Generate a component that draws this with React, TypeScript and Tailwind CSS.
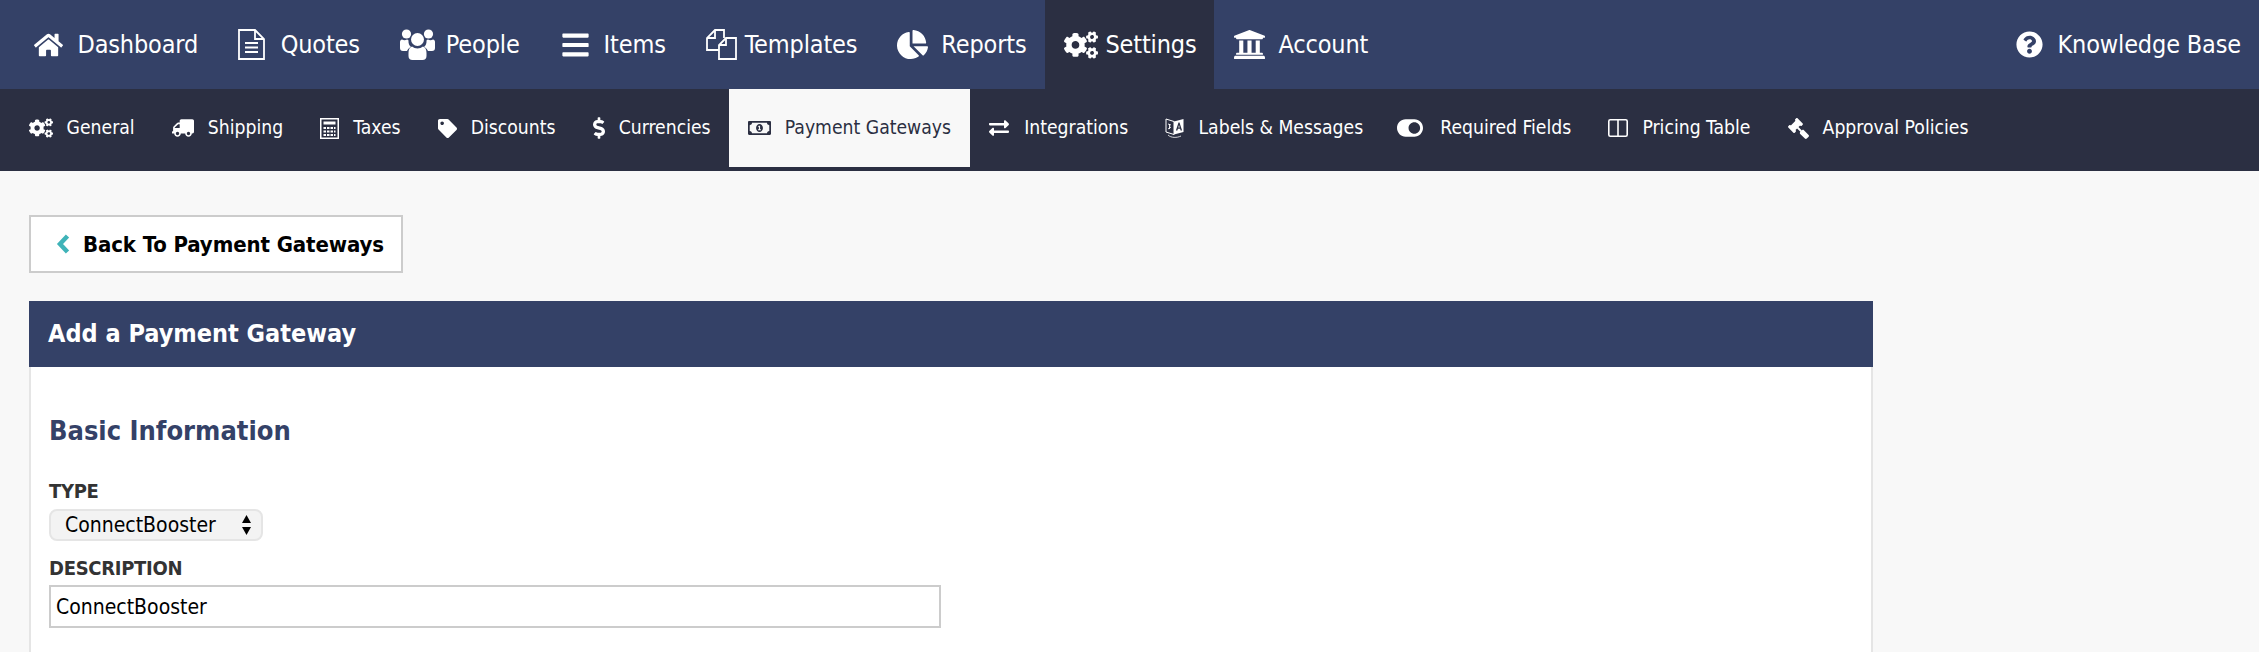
import type { ComponentType } from 'react';
import {
  FaHome, FaBars, FaChartPie, FaCogs, FaUniversity, FaQuestionCircle, FaTruck, FaTag,
  FaDollarSign, FaRegMoneyBillAlt, FaExchangeAlt, FaToggleOn, FaGavel,
} from 'react-icons/fa';

type IconProps = { className?: string };
type IconType = ComponentType<IconProps>;

function DocIcon({ className }: IconProps) {
  return (
    <svg viewBox="0 0 27 31" className={className} fill="none" stroke="currentColor" strokeWidth="1.8">
      <path d="M1 1h16l9 9v20H1z" />
      <path d="M17 1v9h9" />
      <path d="M7 14h13M7 18.5h13M7 23h13" strokeWidth="2" />
    </svg>
  );
}

function PeopleIcon({ className }: IconProps) {
  return (
    <svg viewBox="0 0 35 31" className={className} fill="currentColor">
      <circle cx="6.5" cy="5" r="4.6" />
      <circle cx="28.500" cy="5" r="4.6" />
      <circle cx="17.500" cy="10.500" r="6.500" />
      <path d="M0 13c0-1.500 1-2.500 2-2.500 1.500 1 3.500 1 5 0 .5 0 1 .5 1.500 1-.3 2.500.7 5 2.500 6.500-2 1-3.500 2.500-4 4H3c-2 0-3-1-3-3z" />
      <path d="M35 13c0-1.500-1-2.500-2-2.500-1.500 1-3.500 1-5 0-.5 0-1 .5-1.500 1 .3 2.500-.7 5-2.500 6.500 2 1 3.500 2.500 4 4h4c2 0 3-1 3-3z" />
      <path d="M12 17.500c3 2.500 8 2.500 11 0 2.500 1 3.500 3 3.500 6.500v3c0 2.500-1.500 4-4 4h-10c-2.500 0-4-1.500-4-4v-3c0-3.500 1-5.500 3.500-6.500z" />
    </svg>
  );
}

function FilesIcon({ className }: IconProps) {
  return (
    <svg viewBox="0 0 31 31" className={className} fill="none" stroke="currentColor" strokeWidth="1.8">
      <path d="M13 21H1V9l8-8h9v8" />
      <path d="M9 1v8H1" />
      <path d="M13 30V16l7-7h10v21z" />
      <path d="M20 9v7h-7" />
    </svg>
  );
}

function CalcIcon({ className }: IconProps) {
  return (
    <svg viewBox="0 0 19 21" className={className} fill="currentColor">
      <path fillRule="evenodd" d="M0 0h19v21H0zM1.500 1.500v18h16v-18z" />
      <path d="M3.500 3.500h12v3h-12z" />
      <path d="M3.500 9h2.500v2H3.500zM7 9h2.500v2H7zM10.500 9H13v2h-2.500zM14 9h1.500v2H14zM3.500 12.500h2.500v2H3.500zM7 12.500h2.500v2H7zM10.500 12.500H13v2h-2.500zM14 12.500h1.500v2H14zM3.500 16h2.500v2H3.500zM7 16h2.500v2H7zM10.500 16H13v2h-2.500zM14 16h1.500v2H14z" />
    </svg>
  );
}

function LabelsIcon({ className }: IconProps) {
  return (
    <svg viewBox="0 0 19 22" className={className}>
      <path d="M1 2l8 2.500v13L1 15z" fill="none" stroke="currentColor" strokeWidth="1" />
      <path d="M3 7l3 1M4.500 7v5M3 12l3-2" fill="none" stroke="currentColor" strokeWidth="0.9" />
      <path d="M9 4.500L18.500 2v13L9 17.500z" fill="currentColor" />
      <path d="M13.500 5.500l-2.600 8h1.500l.5-1.700h2.200l.5 1.700h1.500l-2.600-8zm-.2 5l.7-2.600.7 2.600z" fill="#2b2f42" />
      <path d="M3 18c3 3 9 3 13 1" fill="none" stroke="currentColor" strokeWidth="0.8" />
    </svg>
  );
}

function ColumnsIcon({ className }: IconProps) {
  return (
    <svg viewBox="0 0 20 18" className={className} fill="none" stroke="currentColor" strokeWidth="1.6">
      <rect x="0.8" y="0.8" width="18.400" height="16.400" rx="1.500" />
      <path d="M10 1v16" />
    </svg>
  );
}

const mainItems: { label: string; icon: IconType; iconClass: string; itemClass: string; active?: boolean }[] = [
  { label: 'Dashboard', icon: FaHome, iconClass: 'w-[29px] h-[26px]', itemClass: 'gap-[14.500px] pr-[20.500px]' },
  { label: 'Quotes', icon: DocIcon, iconClass: 'w-[27px] h-[31px]', itemClass: 'gap-[16px] pr-[21px]' },
  { label: 'People', icon: PeopleIcon, iconClass: 'w-[35px] h-[31px]', itemClass: 'gap-[11px] pr-[22px]' },
  { label: 'Items', icon: FaBars, iconClass: 'w-[29px] h-[30px]', itemClass: 'gap-[14px] pr-[21px]' },
  { label: 'Templates', icon: FilesIcon, iconClass: 'w-[31px] h-[31px]', itemClass: 'gap-[8px] pr-[21px]' },
  { label: 'Reports', icon: FaChartPie, iconClass: 'w-[31px] h-[31px]', itemClass: 'gap-[13px] pr-[19px]' },
  { label: 'Settings', icon: FaCogs, iconClass: 'w-[34px] h-[30px]', itemClass: 'gap-[7px] pr-[17px]', active: true },
  { label: 'Account', icon: FaUniversity, iconClass: 'w-[33px] h-[33px]', itemClass: 'gap-[13px] pr-[19px]' },
];

const subItems: { label: string; icon: IconType; iconClass: string; active?: boolean }[] = [
  { label: 'General', icon: FaCogs, iconClass: 'w-[24px] h-[22px]' },
  { label: 'Shipping', icon: FaTruck, iconClass: 'w-[22px] h-[20px] -scale-x-100' },
  { label: 'Taxes', icon: CalcIcon, iconClass: 'w-[19px] h-[21px]' },
  { label: 'Discounts', icon: FaTag, iconClass: 'w-[19px] h-[19px]' },
  { label: 'Currencies', icon: FaDollarSign, iconClass: 'w-[12px] h-[22px]' },
  { label: 'Payment Gateways', icon: FaRegMoneyBillAlt, iconClass: 'w-[23px] h-[20px]', active: true },
  { label: 'Integrations', icon: FaExchangeAlt, iconClass: 'w-[22px] h-[20px]' },
  { label: 'Labels & Messages', icon: LabelsIcon, iconClass: 'w-[19px] h-[22px]' },
  { label: 'Required Fields', icon: FaToggleOn, iconClass: 'w-[26px] h-[24px] -ml-[3px] mr-[3px]' },
  { label: 'Pricing Table', icon: ColumnsIcon, iconClass: 'w-[20px] h-[18px]' },
  { label: 'Approval Policies', icon: FaGavel, iconClass: 'w-[21px] h-[21px] -scale-x-100' },
];

export default function App() {
  return (
    <div className="h-[652px] overflow-hidden bg-[#f8f8f8] flex flex-col font-['DejaVu_Sans_Condensed','DejaVu_Sans',sans-serif]">
      <div className="h-[89px] flex-none bg-[#344167] flex items-center justify-between pl-[15px] text-white text-[25px] tracking-[-0.15px]">
        <div className="flex h-full">
          {mainItems.map((item) => {
            const Icon = item.icon;
            return (
              <div key={item.label} className={`flex items-center pl-[19px] ${item.itemClass} ${item.active ? 'bg-[#2b2f42]' : ''}`}>
                <Icon className={`flex-none ${item.iconClass}`} />
                <span>{item.label}</span>
              </div>
            );
          })}
        </div>
        <div className="flex items-center gap-[15px] pr-[18px]">
          <FaQuestionCircle className="w-[27px] h-[27px]" />
          <span>Knowledge Base</span>
        </div>
      </div>

      <div className="h-[82px] flex-none bg-[#2b2f42] flex pl-[10px] pb-[4px] text-white text-[19.2px]">
        {subItems.map((item) => {
          const Icon = item.icon;
          return (
            <div key={item.label} className={`flex items-center gap-[14px] px-[18.600px] ${item.active ? 'bg-[#f8f8f8] text-[#2b2f42]' : ''}`}>
              <Icon className={`flex-none ${item.iconClass}`} />
              <span>{item.label}</span>
            </div>
          );
        })}
      </div>

      <div className="pl-[29px] w-[1873px] flex-1 flex flex-col">
        <div className="mt-[44px] self-start h-[58px] w-[374px] bg-white border-2 border-[#cccccc] flex items-center pl-[25px] gap-[13px] font-bold text-[22px] tracking-[-0.1px] text-black">
          <svg viewBox="0 0 14 20" className="w-[14px] h-[20px] text-[#3fb3b8]" fill="none" stroke="currentColor" strokeWidth="4.500">
            <path d="M11.500 2L4 10l7.500 8" />
          </svg>
          <span>Back To Payment Gateways</span>
        </div>

        <div className="mt-[28px] h-[66px] flex-none bg-[#344167] text-white font-bold text-[25px] flex items-center pl-[19px]">
          Add a Payment Gateway
        </div>

        <div className="flex-1 bg-white border-x-2 border-[#e5e5e5] pl-[18px]">
          <h2 className="mt-[47px] text-[27px] leading-[34px] font-bold text-[#344167]">Basic Information</h2>

          <label className="block mt-[31px] text-[20px] leading-[24px] tracking-[-0.3px] font-bold text-[#333333] uppercase">Type</label>
          <div className="relative mt-[6px] w-[214px] h-[32px]">
            <select className="appearance-none w-full h-full pl-[14px] rounded-[8px] border-2 border-[#e5e5e5] bg-[#f3f3f3] text-[21px] leading-none text-black outline-none">
              <option>ConnectBooster</option>
            </select>
            <svg viewBox="0 0 10 22" className="absolute right-[11px] top-[5px] w-[11px] h-[22px] text-black pointer-events-none" fill="currentColor">
              <path d="M5 1l4.500 8h-9zM5 21L.5 13h9z" />
            </svg>
          </div>

          <label className="block mt-[15px] text-[20px] leading-[24px] tracking-[-0.3px] font-bold text-[#333333] uppercase">Description</label>
          <input
            readOnly
            value="ConnectBooster"
            className="block mt-[5px] w-[892px] h-[43px] border-2 border-[#cccccc] bg-white pl-[5px] text-[21px] text-black outline-none"
          />
        </div>
      </div>
    </div>
  );
}
